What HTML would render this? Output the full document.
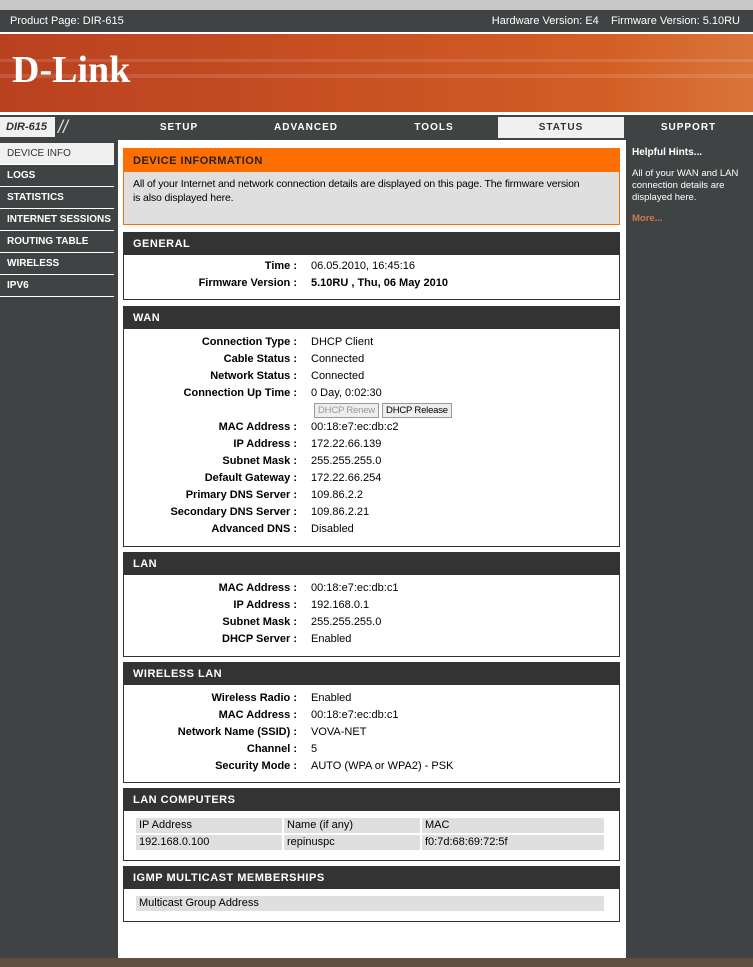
<!DOCTYPE html>
<html><head><meta charset="utf-8"><style>
*{margin:0;padding:0;box-sizing:border-box}
body{width:753px;height:967px;position:relative;overflow:hidden;background:#fff;font-family:"Liberation Sans",Tahoma,sans-serif;font-size:11px;color:#000}
.abs{position:absolute}
.topg{left:0;top:0;width:753px;height:10px;background:#c8c8c8}
.topd{left:0;top:10px;width:753px;height:22px;background:#404344;color:#fff;font-size:11px;line-height:22px}
.banner{left:0;top:34px;width:753px;height:78px;background:linear-gradient(90deg,#b94120 0%,#c64e22 40%,#d35e25 80%,#d9753a 100%)}
.nav{left:0;top:115px;width:753px;height:25px;background:#404344}
.navt{position:absolute;top:0;height:24px;line-height:26px;color:#fff;font-weight:bold;font-size:10px;letter-spacing:1px;text-align:center}
.side{left:0;top:140px;width:116px;height:818px;background:#404344}
.side div{height:22px;line-height:22px;color:#fff;font-weight:bold;font-size:10px;padding-left:7px;border-bottom:1px solid #fff;margin-right:2px}
.hint{left:626px;top:140px;width:127px;height:818px;background:#404344;color:#fff;padding:7px 6px;font-size:9.5px}
.bottom{left:0;top:958px;width:753px;height:9px;background:#5e5040}
.box{position:absolute;left:123px;width:497px;border:1px solid #333}
.hd{background:#333;color:#fff;font-weight:bold;font-size:11px;letter-spacing:.5px;height:22px;line-height:23px;padding-left:9px}
.row{height:17px;line-height:17px;position:relative}
.row b{position:absolute;right:322px;white-space:nowrap}
.row span{position:absolute;left:187px;white-space:nowrap}
.btn{display:inline-block;height:15px;line-height:13px;border:1px solid #999;background:#eee;padding:0 3px;font-size:9.5px;margin-top:1px;letter-spacing:-.2px}
table{border-collapse:separate;border-spacing:3px;margin:5px 0 0 9px}
td{background:#dfdfdf;height:15px;padding-left:3px;line-height:15px}
</style></head><body>
<div class="abs topg"></div>
<div class="abs topd"><span style="position:absolute;left:10px">Product Page: DIR-615</span><span style="position:absolute;right:13px">Hardware Version: E4 &nbsp;&nbsp; Firmware Version: 5.10RU</span></div>
<div class="abs banner">
<div style="position:absolute;left:0;top:25px;width:753px;height:3px;background:rgba(255,255,255,.12)"></div>
<div style="position:absolute;left:0;top:40px;width:753px;height:4px;background:rgba(255,255,255,.12)"></div>
<div style="position:absolute;left:12px;top:14px;color:#fff;font-family:'Liberation Serif',serif;font-weight:bold;font-size:38px;letter-spacing:0px">D-Link</div>
</div>
<div class="abs nav">
<div style="position:absolute;left:0;top:2px;width:55px;height:20px;background:#f0f0f0;font-style:italic;font-weight:bold;color:#333;font-size:11px;line-height:20px;padding-left:6px">DIR-615</div>
<div style="position:absolute;left:58px;top:2px;color:#ddd;font-size:18px;line-height:20px;font-style:italic">//</div>
<div class="navt" style="left:116px;width:126px">SETUP</div>
<div class="navt" style="left:242px;width:128px">ADVANCED</div>
<div class="navt" style="left:370px;width:128px">TOOLS</div>
<div class="navt" style="left:498px;width:126px;top:2px;height:21px;line-height:22px;background:#f0f0f0;color:#333">STATUS</div>
<div class="navt" style="left:624px;width:129px">SUPPORT</div>
</div>
<div class="abs side">
<div style="background:#f0f0f0;color:#333;font-weight:normal;margin-top:3px">DEVICE INFO</div>
<div>LOGS</div><div>STATISTICS</div><div>INTERNET SESSIONS</div><div>ROUTING TABLE</div><div>WIRELESS</div><div>IPV6</div>
</div>
<div class="abs hint"><b style="font-size:10px">Helpful Hints...</b><p style="margin-top:10px;line-height:12px">All of your WAN and LAN connection details are displayed here.</p><p style="margin-top:9px;color:#d2794a;font-weight:bold">More...</p></div>
<div class="abs" style="left:116px;top:140px;width:510px;height:818px;border-left:2px solid #404344"></div>

<div class="box" style="top:148px;height:77px;border:1px solid #ff6f00;background:#dfdfdf">
<div class="hd" style="background:#ff6f00;color:#222;height:23px;line-height:24px">DEVICE INFORMATION</div>
<p style="padding:5px 9px;line-height:14px;font-size:10.5px;letter-spacing:-.15px;white-space:nowrap">All of your Internet and network connection details are displayed on this page. The firmware version<br>is also displayed here.</p></div>

<div class="box" style="top:232px;height:68px"><div class="hd">GENERAL</div><div style="padding-top:3px">
<div class="row"><b>Time :</b><span>06.05.2010, 16:45:16</span></div>
<div class="row"><b>Firmware Version :</b><span style="font-weight:bold">5.10RU , Thu, 06 May 2010</span></div></div></div>

<div class="box" style="top:306px;height:241px"><div class="hd">WAN</div><div style="padding-top:5px">
<div class="row"><b>Connection Type :</b><span>DHCP Client</span></div>
<div class="row"><b>Cable Status :</b><span>Connected</span></div>
<div class="row"><b>Network Status :</b><span>Connected</span></div>
<div class="row"><b>Connection Up Time :</b><span>0 Day, 0:02:30</span></div>
<div class="row"><span style="left:190px"><i class="btn" style="color:#999;font-style:normal">DHCP Renew</i> <i class="btn" style="font-style:normal">DHCP Release</i></span></div>
<div class="row"><b>MAC Address :</b><span>00:18:e7:ec:db:c2</span></div>
<div class="row"><b>IP Address :</b><span>172.22.66.139</span></div>
<div class="row"><b>Subnet Mask :</b><span>255.255.255.0</span></div>
<div class="row"><b>Default Gateway :</b><span>172.22.66.254</span></div>
<div class="row"><b>Primary DNS Server :</b><span>109.86.2.2</span></div>
<div class="row"><b>Secondary DNS Server :</b><span>109.86.2.21</span></div>
<div class="row"><b>Advanced DNS :</b><span>Disabled</span></div></div></div>

<div class="box" style="top:552px;height:105px"><div class="hd">LAN</div><div style="padding-top:5px">
<div class="row"><b>MAC Address :</b><span>00:18:e7:ec:db:c1</span></div>
<div class="row"><b>IP Address :</b><span>192.168.0.1</span></div>
<div class="row"><b>Subnet Mask :</b><span>255.255.255.0</span></div>
<div class="row"><b>DHCP Server :</b><span>Enabled</span></div></div></div>

<div class="box" style="top:662px;height:121px"><div class="hd">WIRELESS LAN</div><div style="padding-top:5px">
<div class="row"><b>Wireless Radio :</b><span>Enabled</span></div>
<div class="row"><b>MAC Address :</b><span>00:18:e7:ec:db:c1</span></div>
<div class="row"><b>Network Name (SSID) :</b><span>VOVA-NET</span></div>
<div class="row"><b>Channel :</b><span>5</span></div>
<div class="row"><b>Security Mode :</b><span>AUTO (WPA or WPA2) - PSK</span></div></div></div>

<div class="box" style="top:788px;height:73px"><div class="hd">LAN COMPUTERS</div>
<table style="border-spacing:2px;margin:5px 0 0 10px"><tr><td style="width:146px">IP Address</td><td style="width:136px">Name (if any)</td><td style="width:182px">MAC</td></tr>
<tr><td>192.168.0.100</td><td>repinuspc</td><td>f0:7d:68:69:72:5f</td></tr></table></div>

<div class="box" style="top:866px;height:56px"><div class="hd">IGMP MULTICAST MEMBERSHIPS</div>
<table style="border-spacing:0;margin:7px 0 0 12px"><tr><td style="width:468px">Multicast Group Address</td></tr></table></div>

<div class="abs bottom"></div>
</body></html>
